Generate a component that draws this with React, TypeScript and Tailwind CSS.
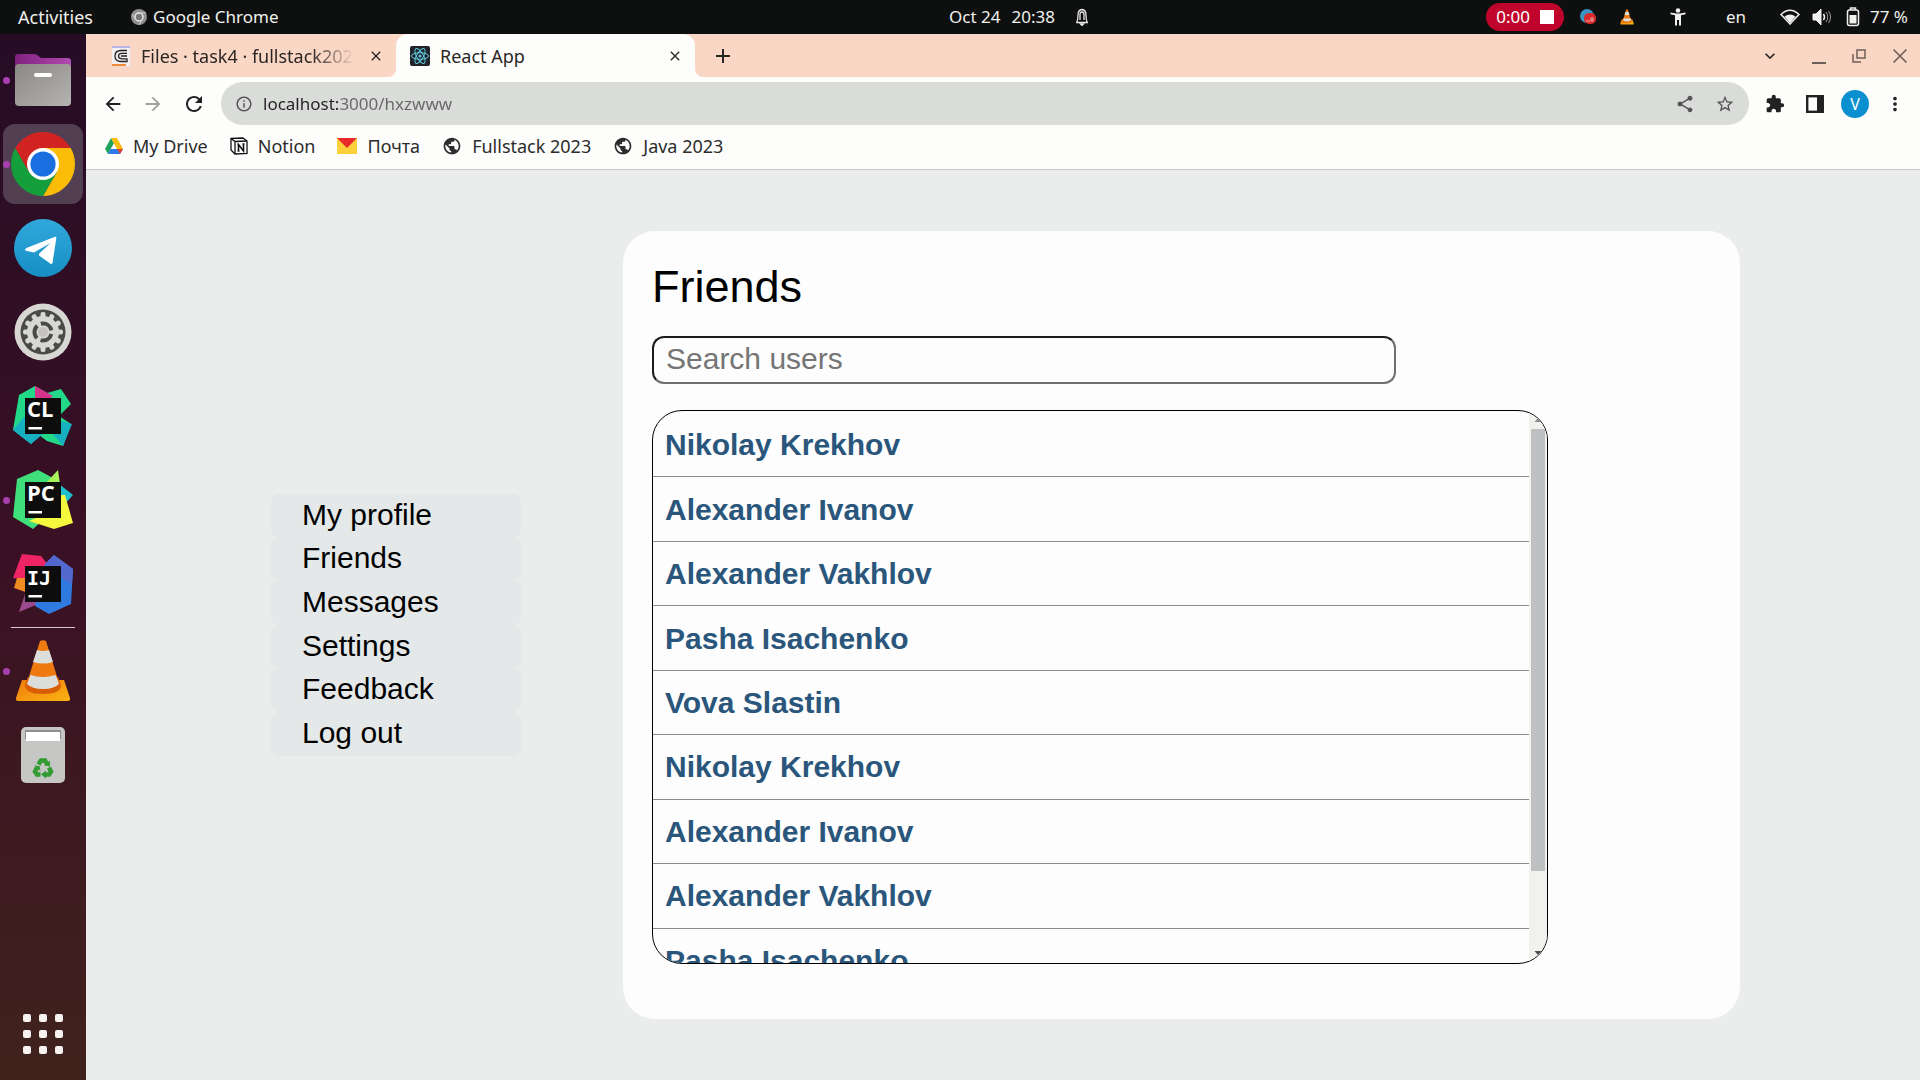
import React from "react";
import {
  MdArrowBack,
  MdArrowForward,
  MdRefresh,
  MdInfoOutline,
  MdShare,
  MdStarBorder,
  MdExtension,
  MdMoreVert,
  MdAdd,
  MdClose,
  MdPublic,
  MdKeyboardArrowDown,
} from "react-icons/md";

const friends = [
  "Nikolay Krekhov",
  "Alexander Ivanov",
  "Alexander Vakhlov",
  "Pasha Isachenko",
  "Vova Slastin",
  "Nikolay Krekhov",
  "Alexander Ivanov",
  "Alexander Vakhlov",
  "Pasha Isachenko",
];

const menu = ["My profile", "Friends", "Messages", "Settings", "Feedback", "Log out"];

function FilesIcon() {
  return (
    <svg viewBox="0 0 60 60" className="size-[60px]" aria-hidden="true">
      <defs>
        <linearGradient id="folder" x1="0" y1="0" x2="1" y2="1">
          <stop offset="0" stopColor="#8b8886" />
          <stop offset="1" stopColor="#b5b3b0" />
        </linearGradient>
        <linearGradient id="folderBack" x1="0" y1="0" x2="1" y2="0">
          <stop offset="0" stopColor="#80207c" />
          <stop offset="1" stopColor="#b04bb0" />
        </linearGradient>
      </defs>
      <path d="M2 7q0-3 3-3h16q2 0 3 1l4 3h27q3 0 3 3v14H2z" fill="url(#folderBack)" />
      <rect x="2" y="14" width="56" height="42" rx="4" fill="url(#folder)" />
      <rect x="21" y="23" width="18" height="4" rx="2" fill="#fff" />
    </svg>
  );
}

function ChromeIcon({ className }: { className: string }) {
  return (
    <svg viewBox="0 0 64 64" className={className} aria-hidden="true">
      <path d="M32 16H59.7A32 32 0 0 1 32 64L45.9 40z" fill="#fbbc08" />
      <path d="M45.9 40 32 64A32 32 0 0 1 4.3 16L18.1 40z" fill="#159e3c" />
      <path d="M18.1 40 4.3 16A32 32 0 0 1 59.7 16H32z" fill="#d22323" />
      <circle cx="32" cy="32" r="16" fill="#fff" />
      <circle cx="32" cy="32" r="12.6" fill="#1a6fe0" />
    </svg>
  );
}

function TelegramIcon() {
  return (
    <svg viewBox="0 0 58 58" className="size-[58px]" aria-hidden="true">
      <defs>
        <linearGradient id="tg" x1="0" y1="0" x2="0" y2="1">
          <stop offset="0" stopColor="#30a8dc" />
          <stop offset="1" stopColor="#178fc4" />
        </linearGradient>
      </defs>
      <circle cx="29" cy="29" r="29" fill="url(#tg)" />
      <path d="M11 31q0-1.500 2-2.300l28-11q1.600-.4 1.300 1.500L38.500 44q-.5 1.500-2 .8L25 36.500v-1.800L36.500 24 20 33.400l-8-1.700z" fill="#fff" />
    </svg>
  );
}

function SettingsIcon() {
  const teeth = [0, 30, 60, 90, 120, 150, 180, 210, 240, 270, 300, 330];
  return (
    <svg viewBox="0 0 58 58" className="size-[58px]" aria-hidden="true">
      <circle cx="29" cy="29" r="28.500" fill="#d8d7d4" />
      <circle cx="29" cy="29" r="22.500" fill="#4a4b48" />
      {teeth.map((a) => (
        <rect key={a} x="26.500" y="9" width="5" height="8" rx="2" fill="#d8d7d4" transform={`rotate(${a} 29 29)`} />
      ))}
      <circle cx="29" cy="29" r="16" fill="#d8d7d4" />
      <circle cx="29" cy="29" r="8.500" fill="none" stroke="#4a4b48" strokeWidth="4" strokeDasharray="13.800 4" strokeDashoffset="-2" />
      <circle cx="29" cy="29" r="5" fill="#c4c3c0" />
    </svg>
  );
}

function JetBrainsIcon({ code, children }: { code: string; children: React.ReactNode }) {
  return (
    <svg viewBox="0 0 60 60" className="size-[60px]" role="img" aria-label={code}>
      {children}
      <rect x="12" y="12" width="36" height="36" fill="#0c0d0c" />
      <text
        x="14"
        y="31"
        fill="#fff"
        className={code === "IJ" ? "font-['DejaVu_Sans_Mono',monospace] text-[20px] font-bold" : "font-['Open_Sans',sans-serif] text-[22px] font-bold"}
      >
        {code}
      </text>
      <rect x="15.500" y="41" width="13.500" height="2.500" fill="#fff" />
    </svg>
  );
}

function ConeIcon({ className }: { className: string }) {
  return (
    <svg viewBox="0 0 56 62" className={className} aria-hidden="true">
      <defs>
        <linearGradient id="coneBase" x1="0" y1="0" x2="1" y2="1">
          <stop offset="0" stopColor="#ef7a0c" />
          <stop offset="1" stopColor="#fbb413" />
        </linearGradient>
      </defs>
      <path d="M7 40h42l6 18q.5 3-2 3H3q-2.500 0-2-3z" fill="url(#coneBase)" />
      <path d="M10 45q0 9 18 9t18-9l-3-8H13z" fill="#d95f06" />
      <path d="M25 1q3-1.500 6 0l13 42q-4 6-16 6t-16-6z" fill="#ee7a10" />
      <path d="M22 10q6 2 12 0l4 12q-10 3-20 0zM15.500 35q12 4 25 0l3.500 9q-5 5-16 5t-16-5z" fill="#dcdedb" />
    </svg>
  );
}

function TrashIcon() {
  return (
    <svg viewBox="0 0 60 60" className="size-[60px]" aria-hidden="true">
      <rect x="8" y="2" width="44" height="56" rx="5" fill="#c6c6c5" />
      <path d="M12 5h36v9H12z" fill="#8e8e8c" />
      <path d="M13 7h34v9H13z" fill="#fff" />
      <g fill="none" stroke="#329b32" strokeWidth="4.500">
        <path d="M25.500 39.500 28 35.500h4l2 3.500" />
        <path d="M36 42.500l2 4-2 3h-4.500" />
        <path d="M27.500 49.500H24l-2-3 2-4" />
      </g>
      <path d="M31 40.500l6 1v-6zM33 45.500v8l-5-4zM21 40.500l5.500.5 1 5z" fill="#329b32" />
    </svg>
  );
}

function GridIcon() {
  const spots = [10, 26, 42];
  return (
    <svg viewBox="0 0 60 60" className="size-[60px]" aria-hidden="true">
      {spots.flatMap((y) => spots.map((x) => <rect key={`${x}-${y}`} x={x} y={y} width="8" height="8" rx="2" fill="#f5f3f0" />))}
    </svg>
  );
}

function DockItem({ label, running, active, children }: { label: string; running?: boolean; active?: boolean; children: React.ReactNode }) {
  return (
    <button
      type="button"
      aria-label={label}
      className={`relative flex size-20 shrink-0 items-center justify-center rounded-xl ${active ? "bg-[#524052]" : ""}`}
    >
      {running && <span className="absolute left-0 size-[7px] rounded-full bg-[#a83fb0]" />}
      {children}
    </button>
  );
}

function Dock() {
  return (
    <nav aria-label="Dock" className="flex w-[86px] shrink-0 flex-col items-center gap-1 bg-linear-to-b from-[#260c25] via-[#3a1024] to-[#40221c] py-1.5">
      <DockItem label="Files" running><FilesIcon /></DockItem>
      <DockItem label="Google Chrome" running active><ChromeIcon className="size-16" /></DockItem>
      <DockItem label="Telegram"><TelegramIcon /></DockItem>
      <DockItem label="Settings"><SettingsIcon /></DockItem>
      <DockItem label="CLion">
        <JetBrainsIcon code="CL">
          <path d="M6 9 22 0 34 7 48 3 58 18 46 30 58 38 50 60 34 55 26 49 18 58 0 44z" fill="#22d98a" />
          <path d="M22 0 40 10 32 16H22z" fill="#d6338c" />
          <path d="M0 44 12 30 30 48 18 58zM44 34l15 4-9 22-10-12z" fill="#17b0c0" />
        </JetBrainsIcon>
      </DockItem>
      <DockItem label="PyCharm" running>
        <JetBrainsIcon code="PC">
          <path d="M4 9 25 0 40 8 30 50 20 59 0 47z" fill="#3fe07c" />
          <path d="M32 14 45 0 47 14z" fill="#a9f25c" />
          <path d="M46 14 60 25 50 36z" fill="#1fc0cf" />
          <path d="M44 25h8l8 28-19 6-25-8 14-6z" fill="#f4f93e" />
        </JetBrainsIcon>
      </DockItem>
      <DockItem label="IntelliJ IDEA">
        <JetBrainsIcon code="IJ">
          <path d="M9 0 28 2 36 12 20 26 0 24z" fill="#ee2465" />
          <path d="M4 24h14v16L1 34z" fill="#ee8b22" />
          <path d="M12 40 30 48 6 58z" fill="#9a4a8c" />
          <path d="M32 10 41 1 60 15 58 50 36 60 22 52z" fill="#2f7ae0" />
          <path d="M32 10 41 1 60 15 59 30 40 20z" fill="#5268cf" />
        </JetBrainsIcon>
      </DockItem>
      <hr className="-my-px w-16 border-[#d9c6cc]" />
      <DockItem label="VLC" running><ConeIcon className="h-[62px] w-14" /></DockItem>
      <DockItem label="Trash"><TrashIcon /></DockItem>
      <div className="mt-auto"><DockItem label="Show applications"><GridIcon /></DockItem></div>
    </nav>
  );
}

function TopBar() {
  return (
    <header className="grid h-[34px] grid-cols-[1fr_auto_1fr] items-center bg-[#0e100f] text-[17px] leading-6 text-[#f0f0ee]">
      <div className="flex items-center pl-[18px]">
        <button type="button" className="text-lg leading-6">Activities</button>
        <button type="button" className="ml-[38px] flex items-center gap-1.5">
          <svg viewBox="0 0 16 16" className="size-4" aria-hidden="true">
            <circle cx="8" cy="8" r="8" fill="#8f8f8f" />
            <circle cx="8" cy="8" r="4" fill="#777" stroke="#e6e6e6" strokeWidth="1.500" />
            <path d="M8 4h7M4.500 10 1 5M11.500 10 8 16" stroke="#d0d0d0" />
          </svg>
          Google Chrome
        </button>
      </div>
      <button type="button" className="ml-[118px] flex items-center">
        <span>Oct 24</span>
        <span className="ml-[11px]">20:38</span>
        <svg viewBox="0 0 14 18" className="ml-5 h-[18px] w-3.5" fill="none" stroke="#e8e8e6" strokeWidth="1.300" aria-hidden="true">
          <path d="M1 14.500h12M2 14q1-2 1-7 0-5 4-5.500Q11 2 11 7q0 5 1 7M5 7q0-3 2-3t2 3M5 7v5M9 7v5" />
          <path d="M5.500 16h3L7 17.500z" fill="#e8e8e6" />
        </svg>
      </button>
      <div className="flex items-center justify-end pr-3">
        <button type="button" className="flex h-7 items-center gap-2.5 rounded-full bg-[#c0052c] px-2.5 text-white">
          0:00
          <span className="size-3.5 bg-white" />
        </button>
        <svg viewBox="0 0 16 16" className="ml-4 size-4" aria-hidden="true">
          <circle cx="7" cy="7" r="7" fill="#3a94c4" />
          <rect x="4" y="4" width="12" height="11" rx="5" fill="#d92b2b" />
          <path d="M6 12h4M11 9h2v3h-2z" stroke="#f3b0b0" fill="none" />
        </svg>
        <ConeIcon className="ml-6 h-4 w-3.5" />
        <svg viewBox="0 0 16 18" className="ml-9 h-[18px] w-4" fill="#f0f0ee" aria-hidden="true">
          <circle cx="8" cy="2.500" r="2.300" />
          <path d="M.5 4.500 6 5.500h4l5.500-1v1.700l-4.500 1V17.500H9V12H7v5.500H5V7.200L.5 6.200z" />
        </svg>
        <button type="button" className="ml-10">en</button>
        <svg viewBox="0 0 20 16" className="ml-[34px] h-4 w-5" fill="none" aria-hidden="true">
          <path d="M1 5.500Q10-3 19 5.500L10 15z" stroke="#f0f0ee" strokeWidth="1.500" />
          <path d="M4.500 7.500q5.500-4 11 0L10 14z" fill="#f0f0ee" />
        </svg>
        <svg viewBox="0 0 20 18" className="ml-3 h-[18px] w-5" fill="none" stroke="#f0f0ee" aria-hidden="true">
          <path d="M1 6h3l5-5v16l-5-5H1z" fill="#f0f0ee" />
          <path d="M11.500 6q2 3 0 6" strokeWidth="1.500" />
          <path d="M14 4q3.500 5 0 10M16.500 3q4 6 0 12" strokeWidth="1" opacity=".6" />
        </svg>
        <svg viewBox="0 0 14 20" className="ml-3.5 h-5 w-3.5" fill="none" aria-hidden="true">
          <path d="M4.500 3V1h5v2" stroke="#f0f0ee" strokeWidth="1.500" />
          <rect x="1.500" y="3" width="11" height="15.500" rx="2" stroke="#f0f0ee" strokeWidth="1.500" />
          <path d="M3.500 8h7v8.500h-7z" fill="#f0f0ee" />
        </svg>
        <span className="ml-2.5">77 %</span>
      </div>
    </header>
  );
}

function TabStrip() {
  return (
    <div className="flex h-[43px] bg-[#fdfdfc] text-lg leading-6 text-[#2a2624]">
      <div className="flex w-[310px] items-center rounded-br-lg bg-[#fad6c4] pl-[26px]">
        <svg viewBox="0 0 18 20" className="h-5 w-[18px]" aria-hidden="true">
          <rect width="18" height="20" fill="#f3eef0" />
          <path d="M0 0h18v2H0z" fill="#b5b5e2" />
          <path d="M0 18h14v2H0z" fill="#ee8a3c" />
          <path d="M15 4.500H9q-6 0-6 5.500t6 5.500h6v-2.700H9M15 7.300H9.500Q6.500 7.500 6.500 10t3 2.700M15 10H9" fill="none" stroke="#222" strokeWidth="1.300" />
        </svg>
        <span className="ml-[11px] w-[213px] overflow-hidden whitespace-nowrap mask-r-from-80% mask-r-to-100%">Files · task4 · fullstack2023</span>
        <button type="button" aria-label="Close tab" className="ml-3.5 text-base"><MdClose /></button>
      </div>
      <div className="flex w-[299px] bg-linear-to-b from-[#fad6c4] from-50% to-[#fdfdfc] to-50%">
        <div className="flex flex-1 items-center rounded-t-xl bg-[#fdfdfc] pl-3.5">
          <svg viewBox="0 0 20 20" className="size-5" aria-hidden="true">
            <rect width="20" height="20" rx="2" fill="#20242a" />
            <g fill="none" stroke="#62c7e0">
              <ellipse cx="10" cy="10" rx="8.500" ry="3.300" />
              <ellipse cx="10" cy="10" rx="8.500" ry="3.300" transform="rotate(60 10 10)" />
              <ellipse cx="10" cy="10" rx="8.500" ry="3.300" transform="rotate(120 10 10)" />
            </g>
            <circle cx="10" cy="10" r="1.500" fill="#62c7e0" />
          </svg>
          <span className="ml-2.5">React App</span>
          <button type="button" aria-label="Close tab" className="mr-3 ml-auto text-base"><MdClose /></button>
        </div>
      </div>
      <div className="flex flex-1 items-center rounded-bl-lg bg-[#fad6c4] pr-3 pl-4">
        <button type="button" aria-label="New tab" className="text-2xl"><MdAdd /></button>
        <button type="button" aria-label="Search tabs" className="ml-auto text-xl"><MdKeyboardArrowDown /></button>
        <button type="button" aria-label="Minimize" className="ml-8 flex h-4 w-3.5 items-end border-b-2 border-[#6d5f58]" />
        <button type="button" aria-label="Restore" className="ml-[26px]">
          <svg viewBox="0 0 14 14" className="size-3.5" fill="none" stroke="#6d5f58" strokeWidth="1.500" aria-hidden="true">
            <path d="M5 1h8v8H5zM1 5v8h8" />
          </svg>
        </button>
        <button type="button" aria-label="Close window" className="ml-[26px]">
          <svg viewBox="0 0 16 16" className="size-4" stroke="#6d5f58" strokeWidth="1.600" aria-hidden="true">
            <path d="M1.500 1.500l13 13M14.500 1.500l-13 13" />
          </svg>
        </button>
      </div>
    </div>
  );
}

function Toolbar() {
  return (
    <div className="flex h-[53px] items-center bg-[#fdfdfc] text-[22px] text-[#222]">
      <div className="flex gap-[18px] pl-4">
        <button type="button" aria-label="Back"><MdArrowBack /></button>
        <button type="button" aria-label="Forward" className="text-[#a0a09e]"><MdArrowForward /></button>
        <button type="button" aria-label="Reload"><MdRefresh className="size-6" /></button>
      </div>
      <div className="ml-[15px] flex h-[43px] flex-1 items-center rounded-full bg-[#d9dcd9] pl-3.5 text-[#555]">
        <MdInfoOutline className="size-[18px] shrink-0" />
        <input
          type="text"
          aria-label="Address"
          defaultValue="localhost:3000/hxzwww"
          className="ml-2.5 min-w-0 flex-1 bg-linear-to-r from-[#222] from-[76px] to-[#666] to-[76px] bg-clip-text text-[17px] leading-6 text-transparent caret-black outline-none"
        />
        <button type="button" aria-label="Share" className="text-xl"><MdShare /></button>
        <button type="button" aria-label="Bookmark" className="mr-3.5 ml-5 text-xl"><MdStarBorder /></button>
      </div>
      <div className="flex items-center pr-3.5 pl-4">
        <button type="button" aria-label="Extensions" className="text-xl"><MdExtension /></button>
        <button type="button" aria-label="Side panel" className="ml-[21px]">
          <svg viewBox="0 0 18 18" className="size-[18px]" aria-hidden="true">
            <rect x="1.200" y="1.200" width="15.600" height="15.600" fill="none" stroke="#222" strokeWidth="2.400" />
            <path d="M11 0h7v18h-7z" fill="#222" />
          </svg>
        </button>
        <button type="button" aria-label="Profile" className="ml-[17px] size-7 rounded-full bg-[#0a8fd0] text-base leading-6 text-white">V</button>
        <button type="button" aria-label="Menu" className="ml-[15px]"><MdMoreVert /></button>
      </div>
    </div>
  );
}

function Bookmarks() {
  return (
    <nav aria-label="Bookmarks" className="flex h-10 items-center gap-[22px] border-b border-[#c9cbc4] bg-[#fdfdfc] pb-2 pl-[19px] text-lg leading-6 text-[#2c2c2c]">
      <a href="#drive" className="flex items-center gap-2.5">
        <svg viewBox="0 0 18 18" className="size-[18px]" aria-hidden="true">
          <path d="M6 1 0 12l3 5 6-11z" fill="#1ea45a" />
          <path d="M6 1h6l6 11h-6z" fill="#fbbd0c" />
          <path d="M5.500 12H18l-3 5H3z" fill="#2f78e8" />
          <path d="M12 12h6l-3 5z" fill="#e8402e" />
        </svg>
        My Drive
      </a>
      <a href="#notion" className="flex items-center gap-2.5">
        <svg viewBox="0 0 18 18" className="size-[18px]" aria-hidden="true">
          <path d="M1 1.500 13 1l4 3v12.500l-12 .5-4-4z" fill="#fff" stroke="#111" strokeWidth="1.300" />
          <path d="M1 1.500l4 3L17 4M5 4.500V17" fill="none" stroke="#111" strokeWidth="1.300" />
          <path d="M8.500 14V7.500l5 6.500V7M7.500 7.500h1.500M7.500 14h2M12.500 7h2" fill="none" stroke="#111" strokeWidth="1.600" />
        </svg>
        Notion
      </a>
      <a href="#mail" className="flex items-center gap-2.5">
        <svg viewBox="0 0 20 16" className="h-4 w-5" aria-hidden="true">
          <path d="M0 0h20v16H0z" fill="#fbd03a" />
          <path d="M0 0h20L10 10z" fill="#ea2a2a" />
        </svg>
        Почта
      </a>
      <a href="#fullstack" className="flex items-center gap-2.5"><MdPublic className="size-5" />Fullstack 2023</a>
      <a href="#java" className="flex items-center gap-2.5"><MdPublic className="size-5" />Java 2023</a>
    </nav>
  );
}

function FriendsPage() {
  return (
    <main className="flex flex-1 items-center bg-[#ebedec] pr-[180px] pl-[185px] font-['Liberation_Sans',Arial,sans-serif] text-[30px] text-black">
      <nav aria-label="Main menu" className="grid h-[262px] w-[250px] shrink-0 grid-rows-6">
        {menu.map((item) => (
          <a key={item} href="#menu" className="flex items-center rounded-lg bg-[#e4e8e8] pb-0.5 pl-[31px] leading-9">{item}</a>
        ))}
      </nav>
      <section className="ml-[102px] min-w-0 flex-1 rounded-[32px] bg-[#fcfdfc] px-[29px] pt-[31px] pb-[55px]">
        <h1 className="text-[45px] leading-[50px]">Friends</h1>
        <input
          type="text"
          aria-label="Search users"
          placeholder="Search users"
          className="mt-6 block h-12 w-full max-w-[744px] rounded-xl border-2 border-t-[#1c1c1c] border-r-[#6f6f6f] border-b-[#6f6f6f] border-l-[#1c1c1c] bg-transparent px-3 pb-0.5 leading-9 outline-none placeholder:text-[#757575]"
        />
        <div className="mt-[26px] flex h-[554px] max-w-[896px] overflow-hidden rounded-[30px] border border-black">
          <ul className="grid h-[582px] flex-1 grid-rows-9 pt-0.5">
            {friends.map((name, i) => (
              <li key={i} className="flex items-center border-b border-[#8b8d8a] pt-px pl-3">
                <a href="#friend" className="leading-9 font-bold text-[#2b567c]">{name}</a>
              </li>
            ))}
          </ul>
          <div aria-hidden="true" className="flex w-[18px] flex-col items-center bg-[#f1f1ee]">
            <svg viewBox="0 0 17 18" className="h-[18px] w-full" fill="#8a8a8a"><path d="M5 11l3.500-4 3.500 4z" /></svg>
            <div className="h-[442px] w-3.5 bg-[#bfc0c1]" />
            <svg viewBox="0 0 17 18" className="mt-auto h-[18px] w-full" fill="#4a4a4a"><path d="M5 6l3.500 4L12 6z" /></svg>
          </div>
        </div>
      </section>
    </main>
  );
}

export default function App() {
  return (
    <div className="flex min-h-screen flex-col font-['Noto_Sans',sans-serif]">
      <TopBar />
      <div className="flex flex-1">
        <Dock />
        <div className="flex min-w-0 flex-1 flex-col">
          <TabStrip />
          <Toolbar />
          <Bookmarks />
          <FriendsPage />
        </div>
      </div>
    </div>
  );
}
